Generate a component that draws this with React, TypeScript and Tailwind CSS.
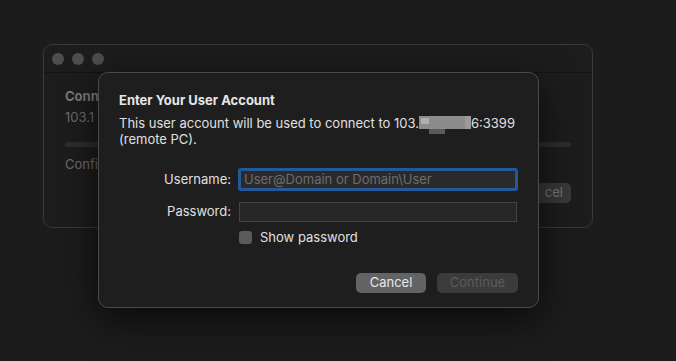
import React from 'react';

const font = { fontFamily: 'Inter, "Liberation Sans", sans-serif' };

function BackWindow() {
  return (
    <div className="ml-[43px] mt-[44px] w-[550px] h-[184px] rounded-[9px] border border-[#3a3a3a] bg-[#1d1d1d] overflow-hidden">
      <div className="h-[28px] flex items-center gap-[8px] pl-[8px] border-b border-[#141414]">
        <span className="w-[12px] h-[12px] rounded-full bg-[#4e4e4e]" />
        <span className="w-[12px] h-[12px] rounded-full bg-[#4e4e4e]" />
        <span className="w-[12px] h-[12px] rounded-full bg-[#4e4e4e]" />
      </div>
      <div className="pl-[21px] pr-[21px] pt-[14px] flex flex-col">
        {/* only the left strip of this text shows beside the dialog */}
        <div className="w-[33px] overflow-hidden whitespace-nowrap text-[13px] font-bold text-[#7b7b7b] leading-[18px]">Conn</div>
        <div className="w-[33px] overflow-hidden whitespace-nowrap text-[13px] text-[#6e6e6e] leading-[18px] mt-[3px]">103.1</div>
        <div className="h-[5px] mt-[16px] rounded-full bg-[#2e2e2e]" />
        <div className="w-[33px] overflow-hidden whitespace-nowrap text-[13px] text-[#6e6e6e] leading-[18px] mt-[8px]">Confi</div>
        <div className="flex justify-end mt-[10px]">
          <div className="w-[34px] h-[20px] rounded-r-[5px] bg-[#3a3a3a] text-[13px] text-[#7a7a7a] flex items-center justify-end pr-[8px] overflow-hidden">
            cel
          </div>
        </div>
      </div>
    </div>
  );
}

function Dialog() {
  return (
    <div className="absolute left-[98px] top-[72px] w-[441px] h-[236px] rounded-[10px] border border-[#4a4a4a] bg-[#1e1e1e] shadow-[0_10px_40px_rgba(0,0,0,0.7)] pl-[20px] pr-[20px] pt-[18px]">
      <div className="text-[13px] font-bold text-[#e6e6e6] leading-[18px]">Enter Your User Account</div>
      <div className="text-[13px] text-[#e0e0e0] leading-[16px] mt-[6px]">
        This user account will be used to connect to 103.
        <span className="relative inline-block w-[52px] h-[13px] align-[-1px] bg-[#8c8c8c]">
          <span className="absolute left-[2px] top-[2px] w-[8px] h-[6px] bg-[#b0b0b0]" />
          <span className="absolute left-[10px] bottom-[-5px] w-[16px] h-[5px] bg-[#5a5a5a]" />
          <span className="absolute right-[0px] top-[0px] w-[6px] h-[13px] bg-[#9a9a9a]" />
        </span>
        6:3399
        <br />
        (remote PC).
      </div>
      <div className="mt-[21px] grid grid-cols-[112px_1fr] gap-x-[7px] items-center">
        <div className="text-right text-[13px] text-[#e0e0e0]">Username:</div>
        <div className="h-[23px] rounded-[3px] border-[3px] border-[#21599a] bg-[#2a2a2a] flex items-center pl-[3px] text-[13px] text-[#6d6d6d]">
          User@Domain or Domain\User
        </div>
        <div className="text-right text-[13px] text-[#e0e0e0] mt-[11px]">Password:</div>
        <div className="h-[20px] mt-[11px] ml-[1px] mr-[1px] border border-[#444] bg-[#272727]" />
        <div />
        <div className="flex items-center gap-[8px] mt-[6px] ml-[1px]">
          <span className="w-[13px] h-[13px] rounded-[3px] bg-[#5a5a5a]" />
          <span className="text-[13px] text-[#e0e0e0]">Show password</span>
        </div>
      </div>
      <div className="flex justify-end gap-[11px] mt-[25px]">
        <div className="w-[70px] h-[20px] rounded-[5px] bg-[#636363] text-[13px] text-[#e8e8e8] flex items-center justify-center">
          Cancel
        </div>
        <div className="w-[81px] h-[20px] rounded-[5px] bg-[#3b3b3b] text-[13px] text-[#5c5c5c] flex items-center justify-center">
          Continue
        </div>
      </div>
    </div>
  );
}

export default function App() {
  return (
    <div className="relative w-[676px] h-[361px] bg-[#1c1c1c] overflow-hidden" style={font}>
      <BackWindow />
      <Dialog />
    </div>
  );
}
